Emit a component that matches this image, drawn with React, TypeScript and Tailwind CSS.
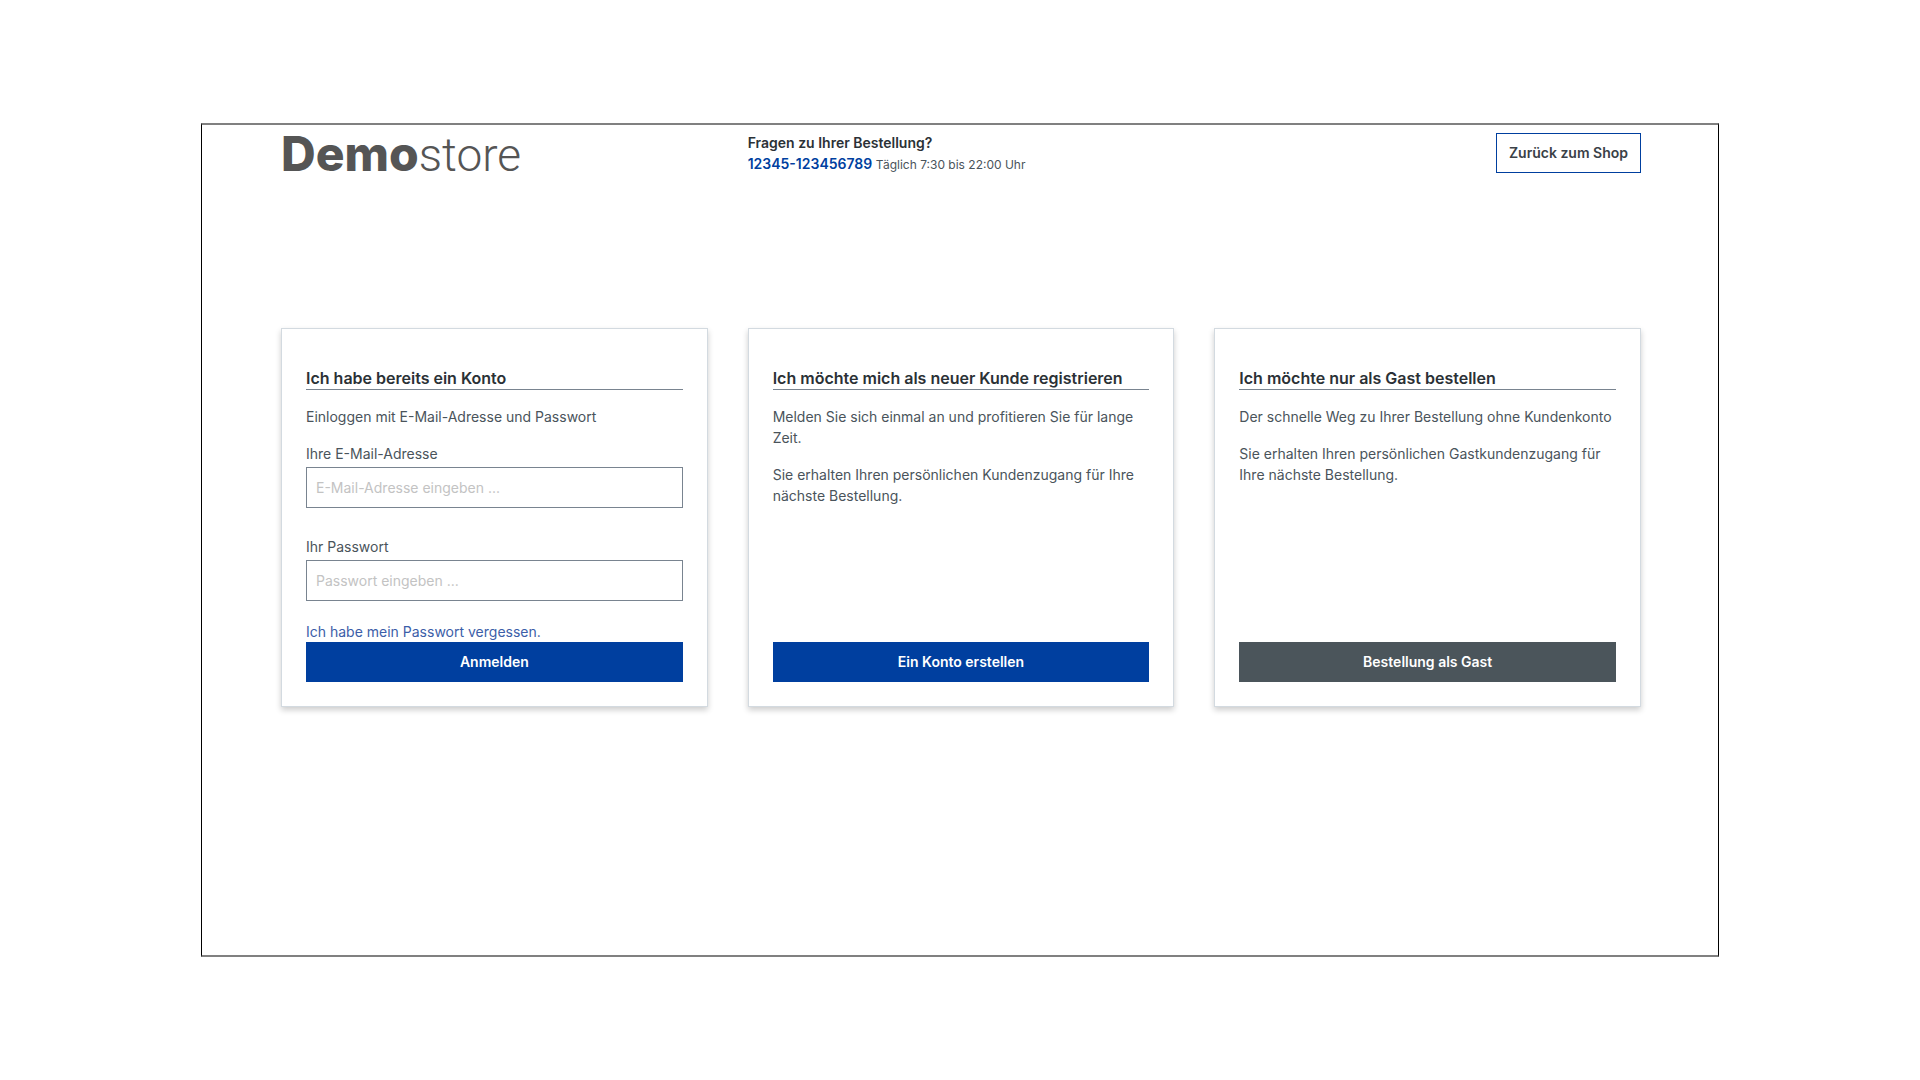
import React, { useState } from 'react';

interface CheckoutCardProps {
    title: string;
    children: React.ReactNode;
}

const CheckoutCard: React.FC<CheckoutCardProps> = ({ title, children }) => (
    <section className="flex flex-col border border-[#d3dae0] bg-white px-6 pt-[38px] pb-6 shadow-[0_3px_6px_rgba(0,0,0,0.2)]">
        <h2 className="mb-4 border-b border-[#798490] text-base leading-[22px] font-semibold text-[#2b3136]">{title}</h2>
        {children}
    </section>
);

interface FieldProps {
    id: string;
    label: string;
    type: string;
    placeholder: string;
    value: string;
    onChange: (value: string) => void;
}

const Field: React.FC<FieldProps> = ({ id, label, type, placeholder, value, onChange }) => (
    <div className="flex flex-col gap-[3px]">
        <label htmlFor={id}>{label}</label>
        <input
            id={id}
            type={type}
            placeholder={placeholder}
            value={value}
            onChange={e => onChange(e.target.value)}
            className="h-[41px] w-full border border-[#798490] px-[9px] placeholder:text-[#c3c3c3]"
        />
    </div>
);

const App: React.FC = () => {
    const [email, setEmail] = useState('');
    const [password, setPassword] = useState('');

    return (
        <div className="flex min-h-screen flex-col bg-white px-[201px] py-[123px] font-['Inter',sans-serif] text-sm leading-[21px] text-[#4a545b]">
            <div className="flex flex-1 flex-col border-x border-y-2 border-x-black border-y-[#808080] pr-[77px] pl-[79px]">
                <header className="grid grid-cols-3 items-center gap-10 pt-[7px]">
                    <div className="flex items-baseline pt-0.5 text-5xl leading-10 text-[#555]">
                        <span className="font-extrabold">Demo</span>
                        <span className="font-['Roboto',sans-serif] text-[46px] font-light">store</span>
                    </div>
                    <div>
                        <p className="font-semibold text-[#2b3136]">Fragen zu Ihrer Bestellung?</p>
                        <p className="text-xs leading-[21px]">
                            <a href="tel:12345123456789" className="text-sm leading-[21px] font-semibold text-[#003f9f]">12345-123456789</a>{' '}
                            Täglich 7:30 bis 22:00 Uhr
                        </p>
                    </div>
                    <div className="flex justify-end pb-0.5">
                        <button type="button" className="h-10 border border-[#003f9f] px-3 font-semibold text-[#3a4147]">
                            Zurück zum Shop
                        </button>
                    </div>
                </header>

                <main className="mt-[153px] grid grid-cols-3 gap-10">
                    <CheckoutCard title="Ich habe bereits ein Konto">
                        <p className="mb-4">Einloggen mit E-Mail-Adresse und Passwort</p>
                        <form className="flex flex-col" onSubmit={e => e.preventDefault()}>
                            <div className="flex flex-col gap-7">
                                <Field
                                    id="email"
                                    label="Ihre E-Mail-Adresse"
                                    type="email"
                                    placeholder="E-Mail-Adresse eingeben ..."
                                    value={email}
                                    onChange={setEmail}
                                />
                                <Field
                                    id="password"
                                    label="Ihr Passwort"
                                    type="password"
                                    placeholder="Passwort eingeben ..."
                                    value={password}
                                    onChange={setPassword}
                                />
                            </div>
                            <a href="#passwort" className="mt-5 self-start text-[#3c5ea8]">Ich habe mein Passwort vergessen.</a>
                            <button type="submit" className="h-10 w-full bg-[#003f9f] pb-0.5 font-semibold text-white">Anmelden</button>
                        </form>
                    </CheckoutCard>

                    <CheckoutCard title="Ich möchte mich als neuer Kunde registrieren">
                        <p className="mb-4">Melden Sie sich einmal an und profitieren Sie für lange Zeit.</p>
                        <p>Sie erhalten Ihren persönlichen Kundenzugang für Ihre nächste Bestellung.</p>
                        <button type="button" className="mt-auto h-10 w-full bg-[#003f9f] pb-0.5 font-semibold text-white">Ein Konto erstellen</button>
                    </CheckoutCard>

                    <CheckoutCard title="Ich möchte nur als Gast bestellen">
                        <p className="mb-4">Der schnelle Weg zu Ihrer Bestellung ohne Kundenkonto</p>
                        <p>Sie erhalten Ihren persönlichen Gastkundenzugang für Ihre nächste Bestellung.</p>
                        <button type="button" className="mt-auto h-10 w-full bg-[#4b555b] pb-0.5 font-semibold text-white">Bestellung als Gast</button>
                    </CheckoutCard>
                </main>
            </div>
        </div>
    );
};

export default App;
